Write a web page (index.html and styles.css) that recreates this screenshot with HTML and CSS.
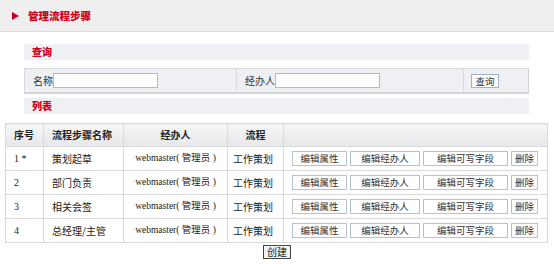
FILE: index.html
```html
<!DOCTYPE html>
<html lang="zh">
<head>
<meta charset="utf-8">
<title>管理流程步骤</title>
<link rel="stylesheet" href="styles.css">
</head>
<body>
<div class="page-header">
  <span class="tri"></span>
  <span class="page-title">管理流程步骤</span>
</div>

<div class="section">
  <div class="bar bar-first"><span class="bar-title">查询</span></div>
  <div class="search-row">
    <div class="search-cell cell-name"><label>名称</label><input class="txt txt-name" type="text"></div>
    <div class="search-cell cell-person"><label>经办人</label><input class="txt txt-person" type="text"></div>
    <div class="search-cell cell-btn"><button class="btn btn-query">查询</button></div>
  </div>
  <div class="bar bar-second"><span class="bar-title">列表</span></div>
</div>

<table class="grid">
  <thead>
    <tr>
      <th class="c-no">序号</th>
      <th class="c-name">流程步骤名称</th>
      <th class="c-person">经办人</th>
      <th class="c-flow">流程</th>
      <th class="c-act"></th>
    </tr>
  </thead>
  <tbody>
    <tr>
      <td class="c-no">1 *</td>
      <td class="c-name">策划起草</td>
      <td class="c-person">webmaster( 管理员 )</td>
      <td class="c-flow">工作策划</td>
      <td class="c-act"><div class="acts"><button class="btn b1">编辑属性</button><button class="btn b2">编辑经办人</button><button class="btn b3">编辑可写字段</button><button class="btn b4">删除</button></div></td>
    </tr>
    <tr>
      <td class="c-no">2</td>
      <td class="c-name">部门负责</td>
      <td class="c-person">webmaster( 管理员 )</td>
      <td class="c-flow">工作策划</td>
      <td class="c-act"><div class="acts"><button class="btn b1">编辑属性</button><button class="btn b2">编辑经办人</button><button class="btn b3">编辑可写字段</button><button class="btn b4">删除</button></div></td>
    </tr>
    <tr>
      <td class="c-no">3</td>
      <td class="c-name">相关会签</td>
      <td class="c-person">webmaster( 管理员 )</td>
      <td class="c-flow">工作策划</td>
      <td class="c-act"><div class="acts"><button class="btn b1">编辑属性</button><button class="btn b2">编辑经办人</button><button class="btn b3">编辑可写字段</button><button class="btn b4">删除</button></div></td>
    </tr>
    <tr>
      <td class="c-no">4</td>
      <td class="c-name">总经理/主管</td>
      <td class="c-person">webmaster( 管理员 )</td>
      <td class="c-flow">工作策划</td>
      <td class="c-act"><div class="acts"><button class="btn b1">编辑属性</button><button class="btn b2">编辑经办人</button><button class="btn b3">编辑可写字段</button><button class="btn b4">删除</button></div></td>
    </tr>
  </tbody>
</table>

<div class="create-row"><button class="btn-create">创建</button></div>
</body>
</html>
```

FILE: styles.css
```css
* { box-sizing: border-box; }
html, body { margin: 0; padding: 0; background: #ffffff; }
body {
  font-family: "Liberation Serif", "Noto Sans CJK SC", serif;
  font-size: 10px;
  color: #222;
  line-height: 1;
}

.page-header {
  height: 32px;
  background: #efefef;
  border-bottom: 1px solid #dcdcdc;
  display: flex;
  align-items: center;
  padding-left: 12px;
}
.tri {
  width: 0; height: 0;
  border-top: 4px solid transparent;
  border-bottom: 4px solid transparent;
  border-left: 7px solid #d00020;
  margin-top: 1px;
}
.page-title {
  margin-left: 9px;
  color: #d00020;
  font-family: "Noto Sans CJK SC", sans-serif;
  font-weight: 900;
  font-size: 10.5px;
  margin-top: 1px;
}

.section { margin: 0 25px 0 24px; }
.bar {
  height: 16px;
  background: #eef0f4;
  display: flex;
  align-items: center;
  padding-left: 8px;
}
.bar-first { margin-top: 12px; }
.bar-second { margin-top: 4px; }
.bar-title {
  color: #d00020;
  font-family: "Noto Sans CJK SC", sans-serif;
  font-weight: 900;
  font-size: 10px;
}

.search-row {
  margin-top: 8px;
  height: 26px;
  background: #eef0f4;
  border: 1px solid #d6d8dc;
  border-right-color: #cfd1d5;
  border-bottom: 2px solid #d3d5d9;
  display: flex;
}
.search-cell {
  display: flex;
  align-items: center;
  font-family: "Noto Sans CJK SC", sans-serif;
  font-size: 10px;
  color: #333;
}
.cell-name { width: 212px; padding-left: 8px; border-right: 1px solid #d6d8dc; }
.cell-person { width: 227px; padding-left: 8px; border-right: 1px solid #d6d8dc; }
.cell-btn { flex: 1; padding-left: 7px; }
.txt {
  height: 15px;
  border: 1px solid #a9bccf;
  background: #fff;
  padding: 0;
  margin: 0;
}
.txt-name { width: 105px; }
.txt-person { width: 105px; }

.btn {
  height: 15px;
  padding: 0;
  margin: 0;
  background: #fff;
  border: 1px solid #b3c2d3;
  font-family: "Noto Sans CJK SC", sans-serif;
  font-size: 9.5px;
  color: #333;
  line-height: 13px;
}
.btn-query { width: 28px; height: 14px; border-color: #9fb2c7; }

.grid {
  margin: 9px 0 0 5px;
  width: 542px;
  border-collapse: collapse;
  border: 1px solid #cfcfcf;
  table-layout: fixed;
}
.grid th, .grid td {
  border: 1px solid #dadada;
  padding: 0;
  text-align: left;
  color: #222;
}
.grid th {
  height: 23px;
  background: linear-gradient(#f6f6f6, #e6e7ea);
  font-family: "Noto Sans CJK SC", sans-serif;
  font-weight: bold;
  font-size: 10px;
}
.grid td {
  height: 24px;
  background: #fff;
  font-size: 10px;
}
.grid td.c-name, .grid td.c-flow { font-family: "Noto Sans CJK SC", sans-serif; }
.grid td.c-person { font-size: 9.5px; white-space: pre; }

.c-no { width: 38px; padding-left: 8px !important; }
.c-name { width: 80px; padding-left: 8px !important; }
.c-person { width: 104px; text-align: center !important; }
.c-flow { width: 56px; text-align: center !important; }
.grid td.c-flow { text-align: left !important; padding-left: 5px !important; }
.c-act { width: 264px; }

.acts {
  display: flex;
  gap: 3px;
  padding-left: 8px;
  align-items: center;
}
.b1 { width: 55px; }
.b2 { width: 70px; }
.b3 { width: 85px; }
.b4 { width: 27px; }

.create-row {
  display: flex;
  justify-content: center;
  margin-top: 2px;
}
.btn-create {
  width: 28px;
  height: 14px;
  padding: 0;
  background: #f4f4f4;
  border: 1px solid #444;
  font-family: "Noto Sans CJK SC", sans-serif;
  font-size: 10px;
  line-height: 12px;
  color: #222;
}
```
